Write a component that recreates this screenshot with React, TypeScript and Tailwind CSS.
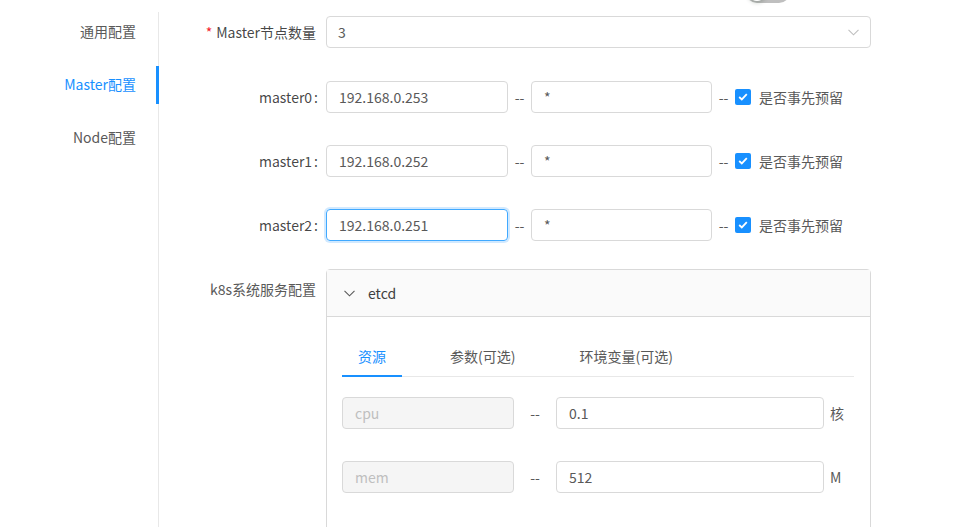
import React from 'react';

const menu = [
  { label: '通用配置', active: false },
  { label: 'Master配置', active: true },
  { label: 'Node配置', active: false },
];

const masters = [
  { name: 'master0', ip: '192.168.0.253', focused: false },
  { name: 'master1', ip: '192.168.0.252', focused: false },
  { name: 'master2', ip: '192.168.0.251', focused: true },
];

function Chevron({ className }: { className?: string }) {
  return (
    <svg className={className} width="11" height="7" viewBox="0 0 11 7" fill="none">
      <path d="M0.5 0.8L5.5 5.8L10.5 0.8" stroke="currentColor" strokeWidth="1.1" />
    </svg>
  );
}

function Label({ children, colon = true, required }: { children: React.ReactNode; colon?: boolean; required?: boolean }) {
  return (
    <div className={`w-[167px] shrink-0 text-right leading-[32px] text-[#262626]/85 ${colon ? '' : 'pr-[10px]'}`}>
      {required && <span className="mr-[4px] text-[#f5222d]">*</span>}
      {children}
      {colon && <span className="ml-[2px] mr-[8px]">:</span>}
    </div>
  );
}

function Input({ value, className = '', focused }: { value: string; className?: string; focused?: boolean }) {
  return (
    <div
      className={`h-[32px] shrink-0 rounded px-[12px] leading-[30px] border ${
        focused ? 'border-[#40a9ff] shadow-[0_0_0_2px_rgba(24,144,255,0.2)]' : 'border-[#d9d9d9]'
      } ${className}`}
    >
      {value}
    </div>
  );
}

function Checkbox() {
  return (
    <span className="flex h-[16px] w-[16px] items-center justify-center rounded-[2px] bg-[#1890ff]">
      <svg width="10" height="8" viewBox="0 0 10 8" fill="none">
        <path d="M1.2 4L3.8 6.4L8.8 1.2" stroke="white" strokeWidth="1.8" />
      </svg>
    </span>
  );
}

export default function App() {
  return (
    <div className="flex h-[527px] overflow-hidden bg-white text-sm text-[#595959] [font-family:'Noto_Sans_CJK_SC','Noto_Sans',sans-serif]">
      <aside className="mt-[12px] w-[159px] shrink-0 border-r border-[#e8e8e8] pt-[1px]">
        {menu.map((m) => (
          <div
            key={m.label}
            className={`relative mb-[15px] h-[38px] pr-[22px] text-right leading-[37px] ${
              m.active ? 'text-[#1890ff]' : 'text-[#595959]'
            }`}
          >
            {m.label}
            {m.active && <span className="absolute right-[-1px] top-0 h-full w-[3px] bg-[#1890ff]" />}
          </div>
        ))}
      </aside>

      <main className="flex-1">
        <div className="-mt-[19px] flex pl-[587px]">
          <div className="relative h-[22px] w-[44px] rounded-full bg-[#bfbfbf]">
            <span className="absolute left-[2px] top-[2px] h-[18px] w-[18px] rounded-full bg-white shadow-[0_2px_4px_rgba(0,35,11,0.2)]" />
          </div>
        </div>

        <div className="mt-[13px] flex">
          <Label required colon={false}>Master节点数量</Label>
          <div className="flex h-[32px] w-[545px] items-center justify-between rounded border border-[#d9d9d9] pl-[11px] pr-[11px] leading-[30px]">
            <span>3</span>
            <Chevron className="text-[#bfbfbf]" />
          </div>
        </div>

        {masters.map((m, i) => (
          <div key={m.name} className={`flex items-center ${i === 0 ? 'mt-[33px]' : 'mt-[32px]'}`}>
            <Label>{m.name}</Label>
            <Input value={m.ip} focused={m.focused} className="w-[182px]" />
            <span className="w-[23px] text-center">--</span>
            <Input value="*" className="w-[181px]" />
            <span className="w-[23px] text-center">--</span>
            <Checkbox />
            <span className="ml-[8px]">是否事先预留</span>
          </div>
        ))}

        <div className="mt-[28px] flex">
          <div className="w-[167px] shrink-0 pr-[10px] text-right leading-[40px]">k8s系统服务配置</div>
          <div className="h-[300px] w-[545px] rounded-t border border-[#d9d9d9]">
            <div className="flex h-[47px] items-center border-b border-[#d9d9d9] bg-[#fafafa] pl-[17px]">
              <Chevron className="text-[#595959]" />
              <span className="ml-[13px] text-[#404040]">etcd</span>
            </div>
            <div className="pl-[15px] pr-[16px] pt-[16px]">
              <div className="flex border-b border-[#e8e8e8]">
                {['资源', '参数(可选)', '环境变量(可选)'].map((t, i) => (
                  <div
                    key={t}
                    className={`relative mr-[32px] px-[16px] pb-[9px] pt-[12px] leading-[22px] ${
                      i === 0 ? 'text-[#1890ff]' : 'text-[#595959]'
                    }`}
                  >
                    {t}
                    {i === 0 && <span className="absolute bottom-[-1px] left-0 h-[2px] w-full bg-[#1890ff]" />}
                  </div>
                ))}
              </div>

              {[
                { k: 'cpu', v: '0.1', unit: '核' },
                { k: 'mem', v: '512', unit: 'M' },
              ].map((r, i) => (
                <div key={r.k} className={`flex items-center ${i === 0 ? 'mt-[20px]' : 'mt-[32px]'}`}>
                  <div className="h-[32px] w-[172px] rounded border border-[#d9d9d9] bg-[#f5f5f5] px-[12px] leading-[30px] text-[#bfbfbf]">
                    {r.k}
                  </div>
                  <span className="w-[42px] text-center">--</span>
                  <Input value={r.v} className="w-[268px]" />
                  <span className="ml-[6px]">{r.unit}</span>
                </div>
              ))}
            </div>
          </div>
        </div>
      </main>
    </div>
  );
}
